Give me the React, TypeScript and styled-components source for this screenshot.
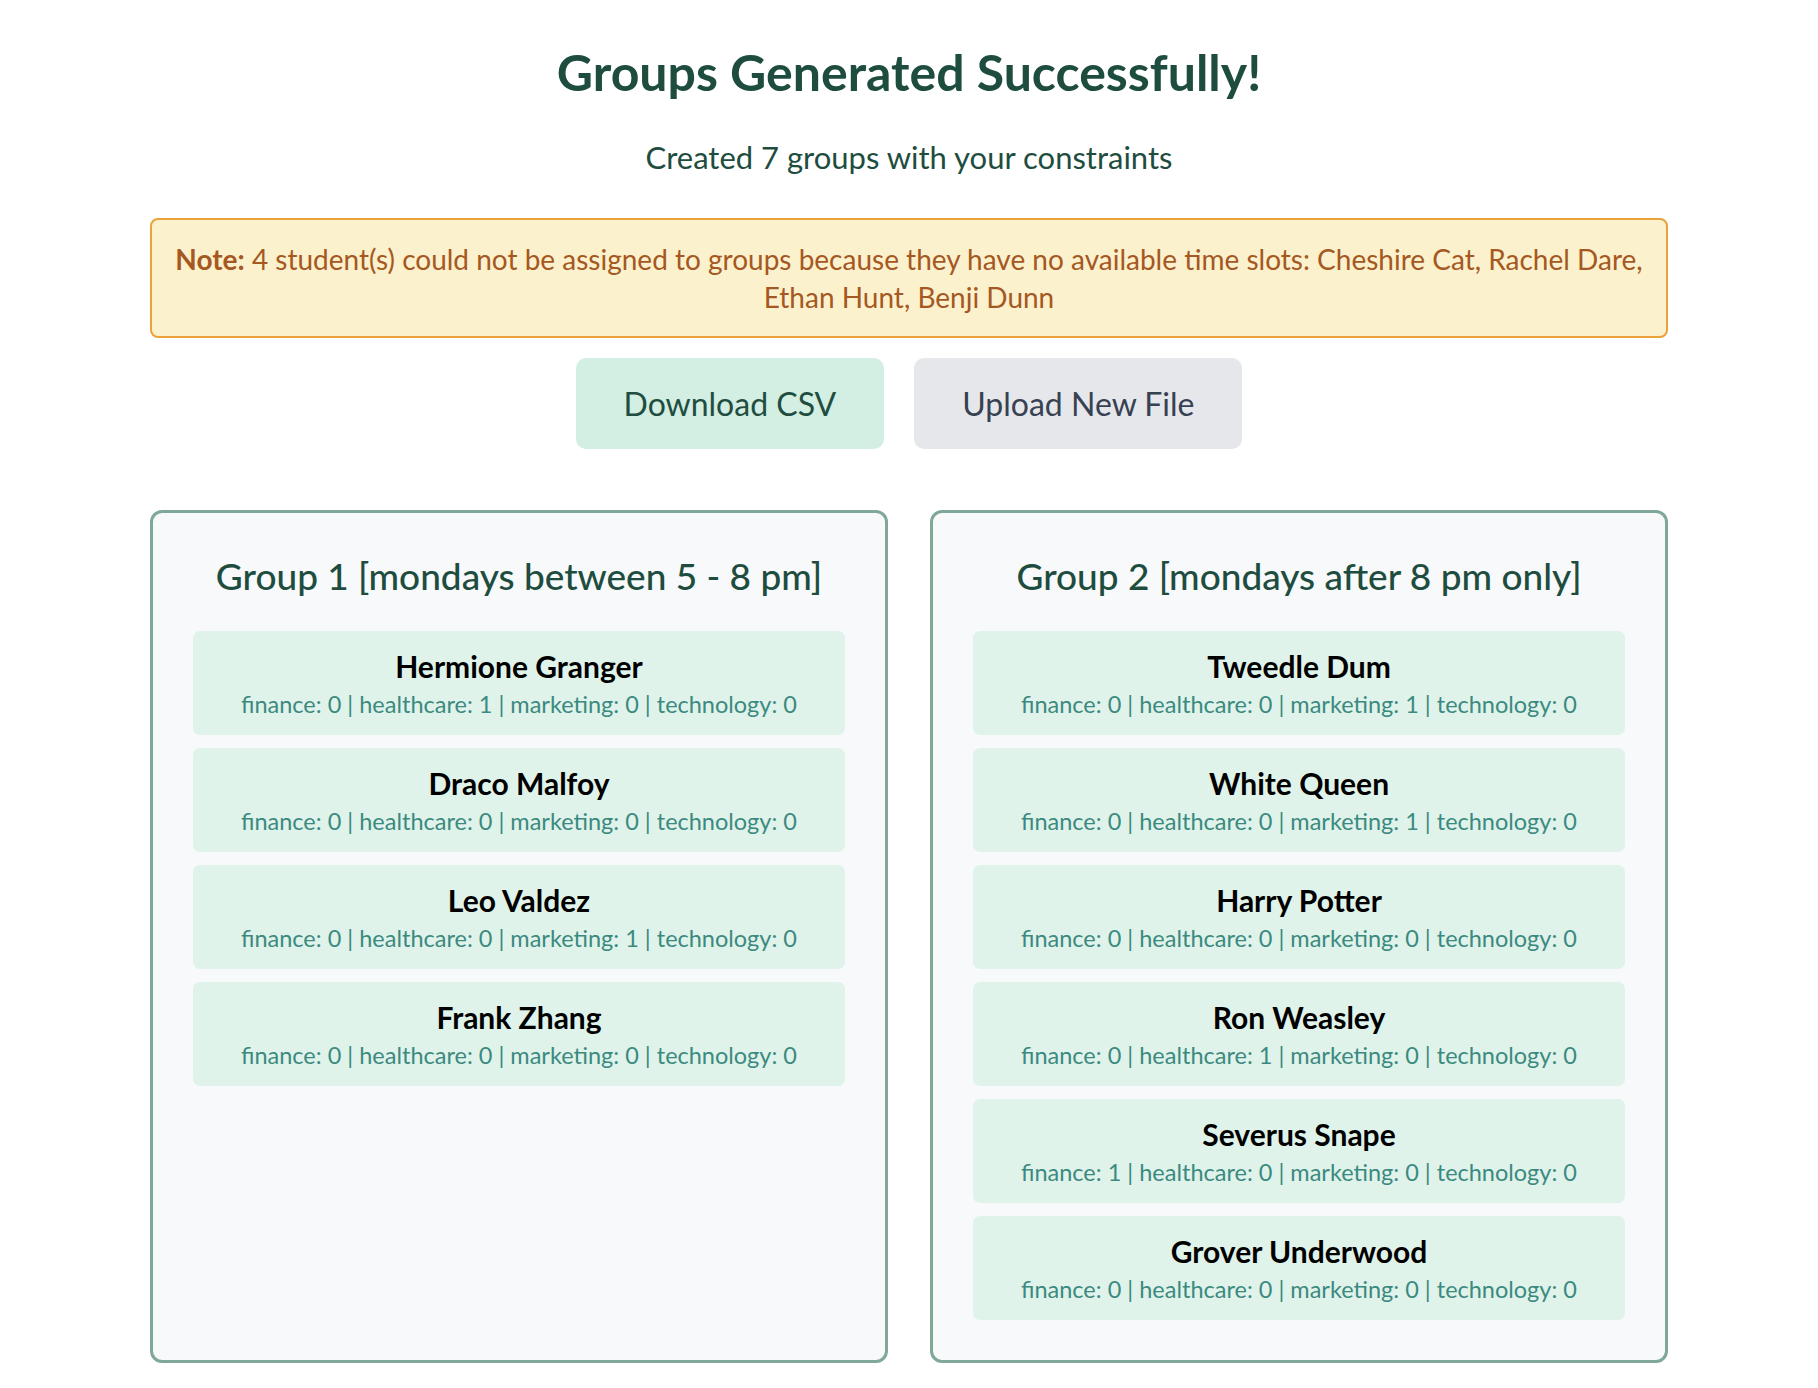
import React from "react";
import styled, { createGlobalStyle } from "styled-components";

const GlobalStyle = createGlobalStyle`
  html, body { margin: 0; padding: 0; background: #ffffff; }
  body { font-family: "Lato", "Noto Sans", sans-serif; }
  * { box-sizing: border-box; }
`;

const Page = styled.main`
  max-width: 1518px;
  margin: 0 auto;
  padding: 44px 0 23px;
  display: flex;
  flex-direction: column;
  align-items: stretch;
`;

const Title = styled.h1`
  margin: 0;
  text-align: center;
  font-size: 50px;
  line-height: 56px;
  font-weight: 700;
  color: #1e4d40;
`;

const Subtitle = styled.p`
  margin: 40px 0 0;
  text-align: center;
  font-size: 31px;
  line-height: 34px;
  font-weight: 400;
  color: #1e4d40;
`;

const Note = styled.div`
  margin-top: 44px;
  padding: 20px 12px;
  border: 2px solid #eaa23a;
  border-radius: 8px;
  background: #fcf1cd;
  color: #a55822;
  font-size: 28px;
  line-height: 38px;
  text-align: center;
  strong { font-weight: 700; }
`;

const Actions = styled.div`
  margin-top: 20px;
  display: flex;
  justify-content: center;
  gap: 30px;
`;

const Button = styled.button<{ $variant: "primary" | "secondary" }>`
  height: 91px;
  padding: 0 48px;
  border: none;
  border-radius: 10px;
  font-family: inherit;
  font-size: 32px;
  font-weight: 400;
  cursor: pointer;
  background: ${(p) => (p.$variant === "primary" ? "#d3eee2" : "#e5e7eb")};
  color: ${(p) => (p.$variant === "primary" ? "#1f4d40" : "#374151")};
`;

const Grid = styled.div`
  margin-top: 61px;
  display: grid;
  grid-template-columns: 1fr 1fr;
  gap: 42px;
`;

const Card = styled.section`
  border: 3px solid #7fa898;
  border-radius: 12px;
  background: #f7f9fa;
  padding: 40px 40px;
  display: flex;
  flex-direction: column;
`;

const CardTitle = styled.h2`
  margin: 0 0 32px;
  text-align: center;
  font-size: 37px;
  line-height: 46px;
  font-weight: 500;
  color: #1e4d40;
`;

const StudentList = styled.div`
  display: flex;
  flex-direction: column;
  gap: 13px;
`;

const Student = styled.div`
  background: #e0f3ea;
  border-radius: 7px;
  padding: 18px 16px 16px;
  text-align: center;
`;

const Name = styled.div`
  font-size: 30px;
  line-height: 34px;
  font-weight: 700;
  color: #000000;
`;

const Details = styled.div`
  margin-top: 6px;
  font-size: 23.5px;
  line-height: 30px;
  font-weight: 400;
  color: #3b8a80;
`;

type StudentData = { name: string; f: number; h: number; m: number; t: number };

const groups: { title: string; students: StudentData[] }[] = [
  {
    title: "Group 1 [mondays between 5 - 8 pm]",
    students: [
      { name: "Hermione Granger", f: 0, h: 1, m: 0, t: 0 },
      { name: "Draco Malfoy", f: 0, h: 0, m: 0, t: 0 },
      { name: "Leo Valdez", f: 0, h: 0, m: 1, t: 0 },
      { name: "Frank Zhang", f: 0, h: 0, m: 0, t: 0 },
    ],
  },
  {
    title: "Group 2 [mondays after 8 pm only]",
    students: [
      { name: "Tweedle Dum", f: 0, h: 0, m: 1, t: 0 },
      { name: "White Queen", f: 0, h: 0, m: 1, t: 0 },
      { name: "Harry Potter", f: 0, h: 0, m: 0, t: 0 },
      { name: "Ron Weasley", f: 0, h: 1, m: 0, t: 0 },
      { name: "Severus Snape", f: 1, h: 0, m: 0, t: 0 },
      { name: "Grover Underwood", f: 0, h: 0, m: 0, t: 0 },
    ],
  },
];

export default function App() {
  return (
    <>
      <GlobalStyle />
      <Page>
        <Title>Groups Generated Successfully!</Title>
        <Subtitle>Created 7 groups with your constraints</Subtitle>
        <Note>
          <strong>Note:</strong> 4 student(s) could not be assigned to groups because they have no
          available time slots: Cheshire Cat, Rachel Dare, Ethan Hunt, Benji Dunn
        </Note>
        <Actions>
          <Button $variant="primary">Download CSV</Button>
          <Button $variant="secondary">Upload New File</Button>
        </Actions>
        <Grid>
          {groups.map((g) => (
            <Card key={g.title}>
              <CardTitle>{g.title}</CardTitle>
              <StudentList>
                {g.students.map((s) => (
                  <Student key={s.name}>
                    <Name>{s.name}</Name>
                    <Details>
                      finance: {s.f} | healthcare: {s.h} | marketing: {s.m} | technology: {s.t}
                    </Details>
                  </Student>
                ))}
              </StudentList>
            </Card>
          ))}
        </Grid>
      </Page>
    </>
  );
}
